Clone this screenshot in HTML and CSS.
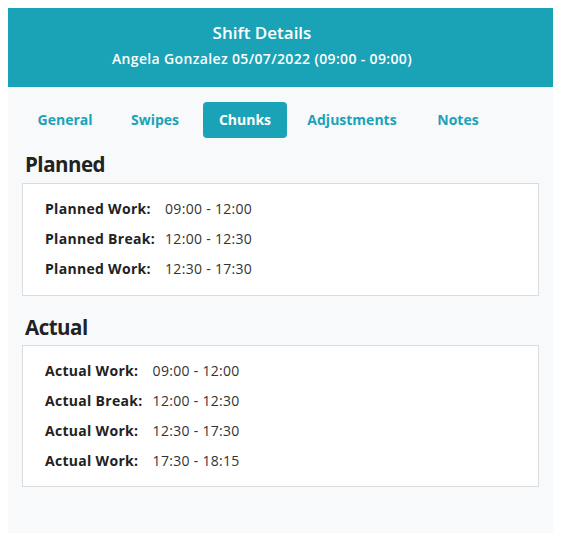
FILE: index.html
```html
<!DOCTYPE html>
<html>
<head>
<meta charset="utf-8">
<link rel="stylesheet" href="styles.css">
</head>
<body>
<div class="panel">
  <div class="header">
    <div class="title">Shift Details</div>
    <div class="subtitle">Angela Gonzalez 05/07/2022 (09:00 - 09:00)</div>
  </div>
  <div class="tabs">
    <div class="slot s1"><span class="tab">General</span></div>
    <div class="slot s2"><span class="tab">Swipes</span></div>
    <div class="slot s3"><span class="tab active">Chunks</span></div>
    <div class="slot s4"><span class="tab">Adjustments</span></div>
    <div class="slot s5"><span class="tab">Notes</span></div>
  </div>
  <h2 class="section-title planned">Planned</h2>
  <div class="card planned-card">
    <div class="grid">
      <div class="label">Planned Work:</div><div class="value">09:00 - 12:00</div>
      <div class="label">Planned Break:</div><div class="value">12:00 - 12:30</div>
      <div class="label">Planned Work:</div><div class="value">12:30 - 17:30</div>
    </div>
  </div>
  <h2 class="section-title actual">Actual</h2>
  <div class="card actual-card">
    <div class="grid">
      <div class="label">Actual Work:</div><div class="value">09:00 - 12:00</div>
      <div class="label">Actual Break:</div><div class="value">12:00 - 12:30</div>
      <div class="label">Actual Work:</div><div class="value">12:30 - 17:30</div>
      <div class="label">Actual Work:</div><div class="value">17:30 - 18:15</div>
    </div>
  </div>
</div>
</body>
</html>
```
FILE: styles.css
```css
* { box-sizing: border-box; }
body {
  margin: 8px;
  background: #ffffff;
  font-family: "Open Sans", sans-serif;
}
.panel {
  width: 545px;
  height: 525px;
  background: #f8f9fb;
  display: flow-root;
}
.header {
  background: #1aa3b7;
  height: 79px;
  color: #ffffff;
  text-align: center;
  padding: 14px 37px 0 0;
}
.title {
  font-size: 17px;
  font-weight: 600;
  line-height: 22px;
}
.subtitle {
  font-size: 14px;
  font-weight: 600;
  line-height: 20px;
  margin-top: 5px;
  letter-spacing: 0.35px;
}
.tabs {
  display: grid;
  grid-template-columns: 90px 90px 90px 124px 88px;
  justify-items: center;
  align-items: center;
  padding: 15px 0 15px 12px;
  height: 66px;
}
.tab {
  display: block;
  font-size: 14px;
  font-weight: 700;
  color: #1aa3b7;
  padding: 0 15.5px;
  height: 36px;
  line-height: 36px;
  border-radius: 4px;
}
.tab.active {
  background: #1aa3b7;
  color: #ffffff;
}
.section-title {
  margin: 0;
  font-size: 20.5px;
  font-weight: 700;
  color: #222222;
  padding-left: 17px;
  line-height: 28px;
  letter-spacing: -0.5px;
}
.section-title.planned {
  margin-top: -3px;
}
.section-title.actual {
  margin-top: 17px;
}
.card {
  margin: 0 14px;
  background: #ffffff;
  border: 1px solid #dcdcdc;
  padding: 15px 22px 16px 22px;
}
.planned-card { margin-top: 5px; }
.actual-card { margin-top: 4px; padding-bottom: 15px; }
.grid {
  display: grid;
  grid-template-columns: max-content max-content;
  column-gap: 10px;
  row-gap: 10px;
  font-size: 14px;
  line-height: 20px;
  letter-spacing: 0.3px;
}
.label {
  font-weight: 700;
  color: #222222;
}
.value {
  color: #333333;
}
```
